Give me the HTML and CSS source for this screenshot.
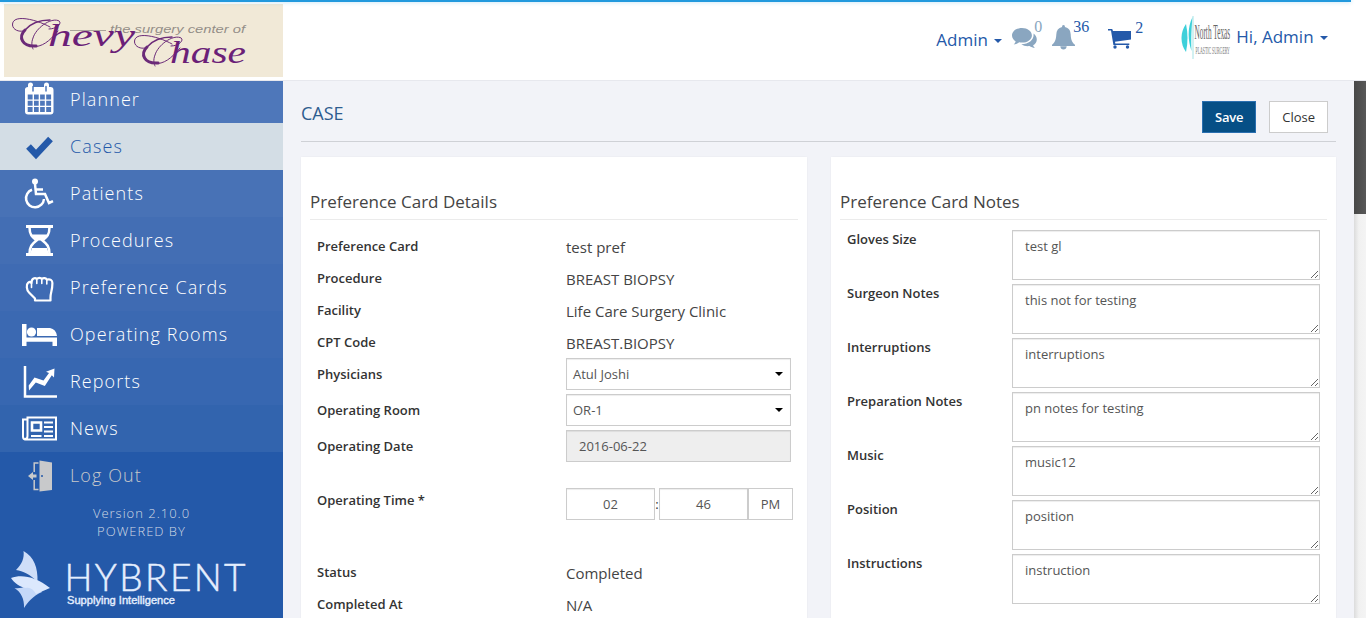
FILE: index.html
```html
<!DOCTYPE html>
<html lang="en">
<head>
<meta charset="utf-8">
<title>Case</title>
<link rel="stylesheet" href="styles.css">
</head>
<body>
<div class="progress"></div>
<header class="topbar">
  <svg class="center-logo" width="279" height="73" viewBox="4 4 279 73">
    <rect x="4" y="4" width="279" height="73" fill="#f1e9d7"/>
    <path d="M70 30.500H106" stroke="#aaa39a" stroke-width="1"/>
    <text x="110" y="33" class="logo-small" textLength="135" lengthAdjust="spacingAndGlyphs">the surgery center of</text>
    <defs>
      <g id="swash" fill="none" stroke="#6b2a78" stroke-linecap="round">
        <path stroke-width="1" d="M49 29C58 29 63 22 58 20.500C50 18 36 28 33 38C31 43 32 47 33 49M36 46.500C45 46 53 37 58 31M50 27C38 20 12 13 12.500 25C13 30 19 32 23 31"/>
        <path stroke-width="3" d="M25 30C18 37 22 47 36 46"/>
        <path stroke-width="1.400" d="M25 30C31 23 40 20 50 20"/>
      </g>
    </defs>
    <use href="#swash"/>
    <use href="#swash" x="122" y="17"/>
    <text x="48" y="46" class="logo-script" textLength="87" lengthAdjust="spacingAndGlyphs">hevy</text>
    <text x="170" y="63" class="logo-script" textLength="76" lengthAdjust="spacingAndGlyphs">hase</text>
  </svg>
  <div class="actions">
    <span class="menu menu-admin">Admin <i class="caret"></i></span>
    <span class="alert chat"><svg width="25" height="22" viewBox="0 0 25 22" fill="#8aa6c0"><path d="M10 0C4.500 0 0 3.300 0 7.500c0 2.400 1.500 4.500 3.700 5.900-.3 1.100-1 2.100-1.900 3 2.200-.2 4-.9 5.400-2.100 1 .2 1.900.3 2.800.3 5.500 0 9.900-3.200 9.900-7.200S15.500 0 10 0Z"/><path d="M21.500 5.500c.9 6.100-4.200 10.700-12.200 10.700 2 1.500 5 2.300 8.200 1.900 1.600 1.100 3.400 1.800 5.400 1.900-.9-.8-1.500-1.700-1.800-2.700 4.800-2.800 4.900-8.500.4-11.800Z"/></svg><sup>0</sup></span>
    <span class="alert bell"><svg width="23" height="25" viewBox="0 0 23 25" fill="#8aa6c0"><path d="M11.500 0c1 0 1.600.8 1.400 1.900 3.800.8 5.700 3.500 5.800 7.600.1 5.200 1.500 8.100 4.300 10.300v1.300H0v-1.300c2.800-2.200 4.100-5.100 4.300-10.300.1-4.100 2-6.800 5.800-7.600C9.900.8 10.500 0 11.500 0ZM8.300 21.300h6.400c-.3 2.200-1.400 3.200-3.200 3.200s-2.900-1-3.200-3.200Z"/></svg><sup>36</sup></span>
    <span class="alert cart"><svg width="23" height="20" viewBox="0 0 23 20" fill="#2459a9"><path d="M0 0h4.200l.8 2H23v8.500L7 12.700l.3 1.800h14v1.600H5.400L3 1.600H0Z"/><circle cx="7" cy="18" r="1.700"/><circle cx="19.500" cy="18" r="1.700"/></svg><sup>2</sup></span>
    <svg class="practice-logo" width="51" height="44" viewBox="0 0 51 44">
      <path d="M5 8C-1 16-1 28 5 36C7 27 7 17 5 8Z" fill="#3dd0da"/>
      <path d="M11.500 1C6 12 7 25 10.500 35C10 22 10.500 12 11.500 1Z" fill="#3dd0da"/>
      <path d="M12 0V43" stroke="#a5e3e5" stroke-width="1"/>
      <text transform="translate(13.500 22.500) scale(.33 1)" class="practice-name" textLength="108" lengthAdjust="spacingAndGlyphs">North Texas</text>
      <text transform="translate(14.500 38) scale(.4 1)" class="practice-sub" textLength="86" lengthAdjust="spacingAndGlyphs">PLASTIC SURGERY</text>
    </svg>
    <span class="menu menu-user">Hi, Admin <i class="caret"></i></span>
  </div>
</header>
<div class="shell">
  <nav class="sidebar">
    <ul class="nav">
      <li class="nav-item planner"><svg viewBox="0 0 36 36" width="36" height="36"><path fill="#fff" fill-rule="evenodd" d="M4 8.500q0-2.500 3-2.500V4a2.500 2.500 0 0 1 5 0v2h11V4a2.500 2.500 0 0 1 5 0v2h1.500q3 0 3 3v21.500q0 3-3 3H7q-3 0-3-3V8.500ZM6.700 13.500v4.900h4.900v-4.900Zm6.300 0v4.900h4.700v-4.900Zm6.100 0v4.900h4.700v-4.900Zm6.100 0v4.900h4.900v-4.900ZM6.700 19.800v4.900h4.900v-4.900Zm6.300 0v4.900h4.700v-4.900Zm6.100 0v4.900h4.700v-4.900Zm6.100 0v4.900h4.900v-4.900ZM6.700 26.100V31h4.900v-4.900Zm6.300 0V31h4.700v-4.900Zm6.100 0V31h4.700v-4.900Zm6.100 0V31h4.900v-4.900Z"/><path d="M12 5.500v4.500M25 5.500v4.500" stroke="#4e77ba" stroke-width="1.500" stroke-linecap="round"/></svg><span>Planner</span></li>
      <li class="nav-item cases"><svg viewBox="0 0 36 36" width="36" height="36"><path d="m7.500 18.500 7.500 8L29.500 11" fill="none" stroke="#2459a9" stroke-width="6.500"/></svg><span>Cases</span></li>
      <li class="nav-item patients"><svg viewBox="0 0 36 36" width="36" height="36" fill="none" stroke="#fff" stroke-width="2.300"><circle cx="14" cy="6.500" r="3" fill="#fff" stroke="none"/><path d="M14 9l1 10h9l4 9 4-1.800M14.500 14.500H22M11 14.800A9 9 0 1 0 23 24" stroke-width="2.500"/></svg><span>Patients</span></li>
      <li class="nav-item procedures"><svg viewBox="0 1 36 36" width="36" height="36"><path d="M5 5.500h27M5 33.500h27" stroke="#fff" stroke-width="2.800"/><path d="M8.500 6c0 8 2.500 10 7 13.500-4.500 3.500-7 6-7 13.500M28.500 6c0 8-2.500 10-7 13.500 4.500 3.500 7 6 7 13.500" fill="none" stroke="#fff" stroke-width="2.500"/><path d="M10.500 13.500h16c-1.500 3-3.500 4.500-5.500 6h-5c-2-1.500-4-3-5.500-6ZM9 33l2-6h15l2 6Z" fill="#fff"/></svg><span>Procedures</span></li>
      <li class="nav-item cards"><svg viewBox="0 0 36 36" width="36" height="36" fill="none" stroke="#fff" stroke-width="2.200" stroke-linejoin="round" stroke-linecap="round"><path d="M14 31.500v-2L8 23.500c-2.500-2.500-3-8-.8-9.800 1-.9 2.400-.8 3.300.2 0-5 3.700-5.400 5.300-3.900 1.500-1.600 4-1.500 5 0 1.600-1.300 4-1 5 .6 3.400-.9 5.600.4 5.600 3.400 0 8-1.900 9-1.900 14.500v3Z"/><path d="M10.500 14v4.500M15.800 11v3.500M20.800 11v3.500M25.800 11.500V15" stroke-width="1.600"/></svg><span>Preference Cards</span></li>
      <li class="nav-item rooms"><svg viewBox="0 0 36 36" width="36" height="36" fill="#fff"><path d="M1 8h4.500v13.500H36V30h-4.500v-4.300h-26V30H1ZM16 12h13q6 1 7 8H16Z"/><circle cx="10.500" cy="16" r="4.600"/></svg><span>Operating Rooms</span></li>
      <li class="nav-item reports"><svg viewBox="0 0 36 36" width="36" height="36"><path d="M4 3v30.500h32" fill="none" stroke="#fff" stroke-width="2.500"/><path d="m8 27.500-.3-5L13.500 14.500l9 3L28 10l-3-1.200 8.500-3.300-.5 9-2.200-2.200-7 10.700-9-3.500Z" fill="#fff"/></svg><span>Reports</span></li>
      <li class="nav-item news"><svg viewBox="0 0 36 36" width="36" height="36" fill="none" stroke="#fff" stroke-width="2"><path d="M6.500 7.500H35v22H4q-2-.5-2-3V9.500h4.500ZM6.500 8v18q0 3-2.500 3"/><path d="M11 12.500h9v8h-9Z" stroke-width="2.600"/><path d="M23 12.500h9M23 17h9M23 21.500h9M10 26h10.500M23 26h9"/></svg><span>News</span></li>
      <li class="nav-item logout"><svg viewBox="0 0 36 36" width="36" height="36"><path d="M18.500 3.500 31 5.500V33l-12.500 1.500Z" fill="#c8c9cb"/><path d="M17.500 6h-4.300v9M13.200 23v9.500h4.300" fill="none" stroke="#c8c9cb" stroke-width="1.500"/><path d="m7 19 5-4v2.500h3.500v3H12V23Z" fill="#c8c9cb"/><circle cx="21" cy="19" r="1" fill="#2459a9"/></svg><span>Log Out</span></li>
    </ul>
    <div class="version"><div>Version 2.10.0</div><div>POWERED BY</div></div>
    <svg class="hybrent" width="283" height="74" viewBox="0 0 283 74">
      <path fill="#cfdef8" d="M23.500 7C34 13 38 23 37.500 38C30 30 23 27 16 26C22 20 24.500 14 23.500 7Z"/>
      <path fill="#c5d8f8" d="M14.500 44C22 45 28 42 32 36L42 48C33 52 28 58 24 64C24.500 55 21 48 14.500 44Z"/>
      <path fill="#dce8fd" d="M11 34C22 30 36 33 50 44C43 47 40 48 36 50C33 45 30 43 26 44C20 43 14 39 11 34Z"/>
      <text x="64.500" y="47" class="hybrent-name" textLength="181" lengthAdjust="spacing">HYBRENT</text>
      <text x="67" y="60" class="hybrent-tag" textLength="108" lengthAdjust="spacingAndGlyphs">Supplying Intelligence</text>
    </svg>
  </nav>
  <main class="content">
    <div class="page-head">
      <h1>CASE</h1>
      <div class="buttons"><button class="btn btn-save">Save</button><button class="btn">Close</button></div>
    </div>
    <div class="columns">
      <section class="card">
        <h2>Preference Card Details</h2>
        <div class="details">
          <div class="row"><label>Preference Card</label><span class="value">test pref</span></div>
          <div class="row"><label>Procedure</label><span class="value">BREAST BIOPSY</span></div>
          <div class="row"><label>Facility</label><span class="value">Life Care Surgery Clinic</span></div>
          <div class="row"><label>CPT Code</label><span class="value">BREAST.BIOPSY</span></div>
          <div class="row row-field"><label>Physicians</label><div class="field select">Atul Joshi<i class="arrow"></i></div></div>
          <div class="row row-field"><label>Operating Room</label><div class="field select">OR-1<i class="arrow"></i></div></div>
          <div class="row row-field"><label>Operating Date</label><div class="field disabled">2016-06-22</div></div>
          <div class="row row-time"><label>Operating Time *</label><div class="time"><div class="field">02</div><span class="colon">:</span><div class="field">46</div><div class="field ampm">PM</div></div></div>
          <div class="row"><label>Status</label><span class="value">Completed</span></div>
          <div class="row"><label>Completed At</label><span class="value">N/A</span></div>
        </div>
      </section>
      <section class="card">
        <h2>Preference Card Notes</h2>
        <div class="notes">
          <div class="note"><label>Gloves Size</label><textarea>test gl</textarea></div>
          <div class="note"><label>Surgeon Notes</label><textarea>this not for testing</textarea></div>
          <div class="note"><label>Interruptions</label><textarea>interruptions</textarea></div>
          <div class="note"><label>Preparation Notes</label><textarea>pn notes for testing</textarea></div>
          <div class="note"><label>Music</label><textarea>music12</textarea></div>
          <div class="note"><label>Position</label><textarea>position</textarea></div>
          <div class="note"><label>Instructions</label><textarea>instruction</textarea></div>
        </div>
      </section>
    </div>
  </main>
  <div class="scrollbar"><div class="thumb"></div></div>
</div>
</body>
</html>
```
FILE: styles.css
```css
* { box-sizing: border-box; }
body {
  margin: 0;
  width: 1366px;
  height: 618px;
  overflow: hidden;
  background: #f2f3f8;
  font-family: "Open Sans", sans-serif;
  color: #333;
}
.progress {
  position: absolute;
  left: 0;
  top: 0;
  width: 1351px;
  height: 2px;
  background: #29d;
  box-shadow: 0 0 4px rgba(34, 153, 221, .4);
}
.topbar {
  height: 81px;
  padding: 4px 38px 0 4px;
  display: flex;
  justify-content: space-between;
  background: #fff;
  border-bottom: 1px solid #e7e8ee;
}
.logo-small { font: italic 10px "Liberation Sans", sans-serif; fill: #948e88; }
.logo-script { font: italic 32px "Liberation Serif", serif; fill: #6b1f78; }
.actions { display: flex; align-items: flex-start; color: #2459a9; }
.menu { font-size: 17px; line-height: 24px; white-space: nowrap; }
.menu-admin { margin: 24px 10px 0 0; }
.menu-user { margin: 21px 0 0 4px; }
.caret {
  display: inline-block;
  margin-left: 2px;
  vertical-align: 3px;
  border: 4px solid transparent;
  border-top-color: #2459a9;
  border-bottom: 0;
}
.alert { display: flex; font: 16px/20px "Liberation Serif", serif; }
.alert sup { font-size: 16px; line-height: 20px; margin-top: 13px; }
.alert svg { display: block; }
.chat { width: 40px; color: #8aa6c0; }
.chat svg { margin: 24px -3px 0 0; }
.bell { width: 56px; }
.bell svg { margin: 21px -2px 0 0; }
.cart { width: 73px; }
.cart svg { margin: 25px 4px 0 0; }
.cart sup { margin-top: 14px; }
.practice-logo { margin-top: 12px; flex: none; overflow: visible; }
.practice-name { font: 21px "Liberation Serif", serif; fill: #666; }
.practice-sub { font: 10px "Liberation Serif", serif; fill: #777; }

.shell { display: flex; height: 537px; }
.sidebar { width: 283px; flex: none; overflow: hidden; background: #2459a9; }
.nav { list-style: none; margin: -5px 0 0; padding: 0; }
.nav-item {
  height: 47px;
  padding: 0 0 2px 21px;
  display: flex;
  align-items: center;
  gap: 13px;
  font-size: 18px;
  font-weight: 300;
  letter-spacing: 1.1px;
  color: #fff;
}
.nav-item svg { flex: none; }
.nav-item.planner { background: #4e77ba; }
.nav-item.cases { background: #d3dde5; color: #2459a9; }
.nav-item.patients { background: #4872b6; }
.nav-item.procedures { background: #436eb4; }
.nav-item.cards { background: #3f6bb3; }
.nav-item.rooms { background: #3b69b2; }
.nav-item.reports { background: #3767b1; }
.nav-item.news { background: #3264ae; }
.nav-item.logout { color: #c8c9cb; }
.version {
  margin-top: 5px;
  font-size: 13px;
  line-height: 18px;
  letter-spacing: 1px;
  text-align: center;
  color: #d2dae4;
  font-weight: 300;
}
.hybrent { display: block; margin-top: 4px; }
.hybrent-name { font: 300 37px Lato, sans-serif; fill: #e4eefe; stroke: #e4eefe; stroke-width: .5px; }
.hybrent-tag { font: 11px "Liberation Sans", sans-serif; fill: #e4eefe; stroke: #e4eefe; stroke-width: .4px; }

.content { flex: 1; padding: 0 18px; overflow: hidden; }
.page-head {
  height: 61px;
  padding: 20px 8px 0 0;
  display: flex;
  justify-content: space-between;
  border-bottom: 1px solid #cfd1d6;
}
h1 { margin: -1px 0 0; font-size: 18px; line-height: 26px; font-weight: 400; color: #2d5c8f; }
.buttons { display: flex; gap: 13px; }
.btn {
  height: 32px;
  padding: 0 12px;
  border: 1px solid #ccc;
  background: #fff;
  font: 13px "Open Sans", sans-serif;
  color: #333;
}
.btn-save {
  width: 54px;
  padding: 0;
  background: #064f86;
  border-color: #2a6fb0;
  color: #fff;
  font-weight: 600;
  letter-spacing: -.2px;
}
.columns { display: flex; gap: 24px; margin-top: 15px; }
.card {
  flex: 1;
  height: 500px;
  padding: 33px 9px 0;
  background: #fff;
  box-shadow: 0 0 2px rgba(0, 0, 0, .05);
}
h2 {
  margin: 0;
  height: 30px;
  font-size: 17px;
  line-height: 23px;
  font-weight: 400;
  color: #444;
  border-bottom: 1px solid #ebebeb;
}
label { font-size: 13px; font-weight: 600; color: #333; }
.details { padding: 10px 5px 0 7px; }
.row { display: grid; grid-template-columns: 249px 1fr; height: 32px; line-height: 32px; }
.row-field { height: 36px; }
.row-time { height: 68px; margin-top: 22px; padding-bottom: 36px; }
.row-time label { line-height: 24px; }
.value { font-size: 15px; line-height: 35px; color: #444; }
.field {
  height: 32px;
  line-height: 30px;
  border: 1px solid #ccc;
  box-shadow: inset 0 1px 1px rgba(0, 0, 0, .075);
  background: #fff;
  font-size: 13px;
  color: #555;
}
.select, .disabled { width: 225px; padding: 0 6px; }
.select { display: flex; justify-content: space-between; align-items: center; }
.disabled { background: #eee; padding-left: 12px; }
.arrow { margin-right: 1px; border: 4px solid transparent; border-top-color: #000; border-bottom: 0; }
.time { display: flex; text-align: center; }
.time .field { width: 89px; flex: none; }
.time .ampm { width: 45px; box-shadow: none; }
.colon { width: 4px; font-size: 13px; }
.notes { padding: 10px 7px 0; }
.note { display: grid; grid-template-columns: 165px 308px; height: 54px; }
.note label { line-height: 18px; }
textarea {
  display: block;
  width: 308px;
  height: 50px;
  padding: 6px 12px;
  border: 1px solid #ccc;
  border-radius: 0;
  box-shadow: inset 0 1px 1px rgba(0, 0, 0, .075);
  font: 13px/19px "Open Sans", sans-serif;
  color: #555;
  overflow: hidden;
  resize: both;
}
.scrollbar { width: 12px; background: linear-gradient(90deg, #dcdcdc, #f1f1f1 40%, #f4f4f4); }
.thumb { height: 133px; background: linear-gradient(90deg, #484848, #585858); }
```
